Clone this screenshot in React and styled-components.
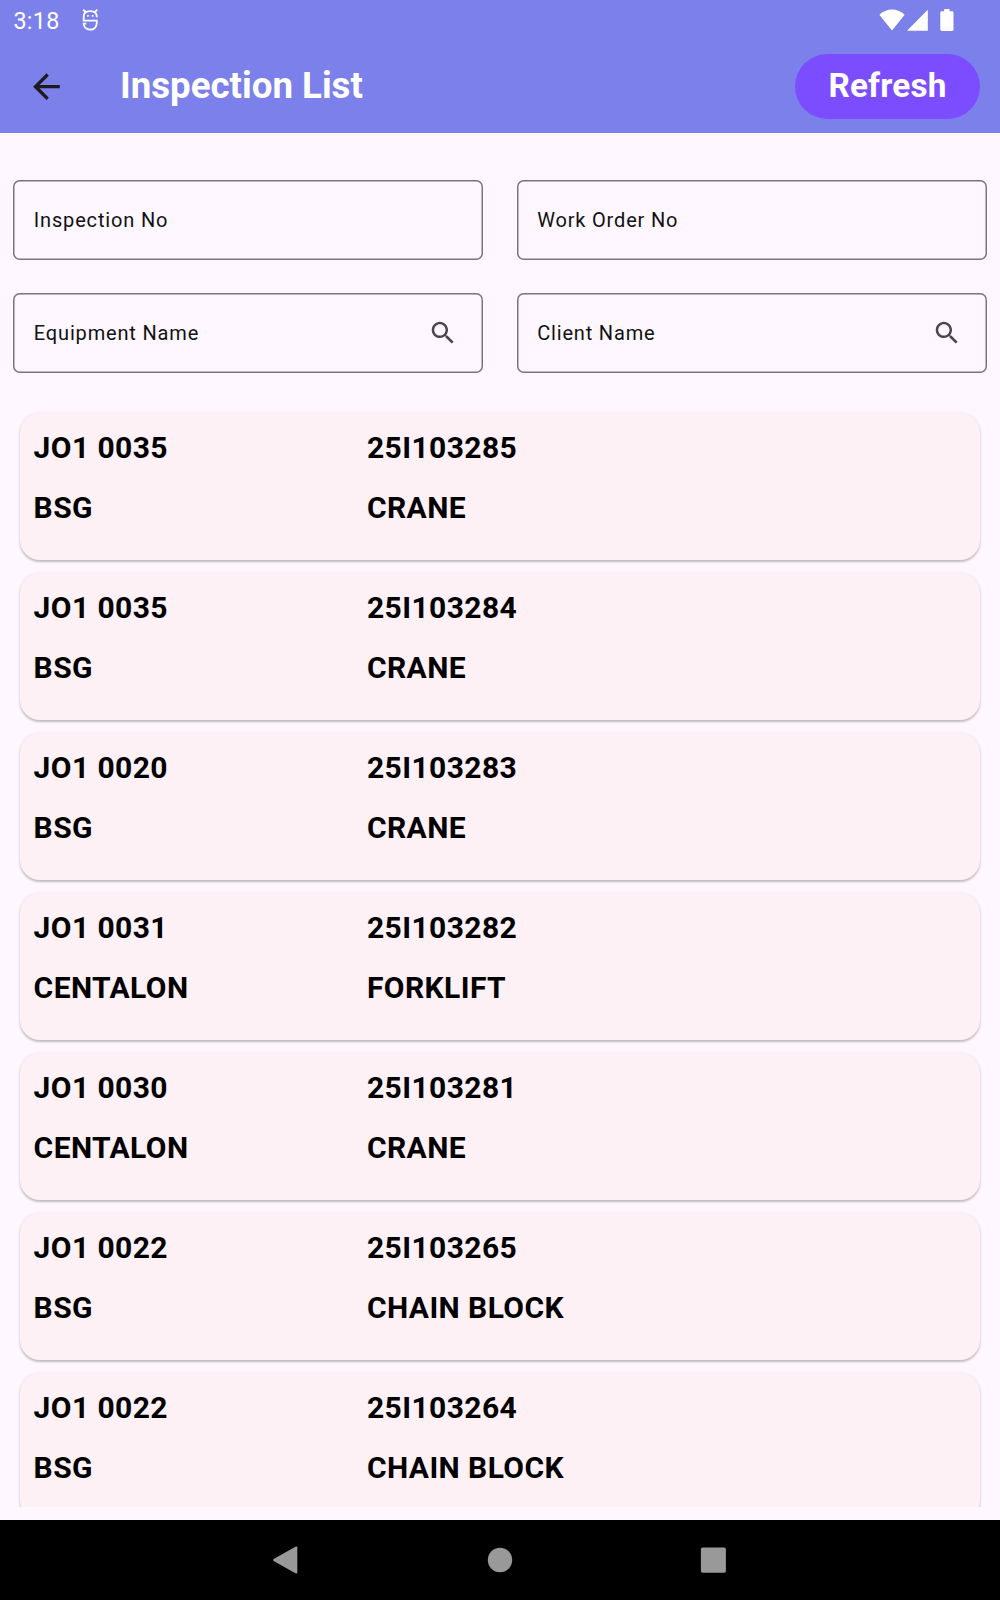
import React from 'react';
import styled, { createGlobalStyle } from 'styled-components';

const GlobalStyle = createGlobalStyle`
  *, *::before, *::after { box-sizing: border-box; }
  body { margin: 0; background: #fef7ff; }
`;

const Screen = styled.div`
  display: flex;
  flex-direction: column;
  width: 1000px;
  height: 1600px;
  overflow: hidden;
  background: #fef7ff;
  color: #000;
  font-family: Roboto, 'Liberation Sans', sans-serif;
`;

const Header = styled.header`
  flex: none;
  height: 133.33px;
  background: #7c80ea;
  color: #fff;
`;

const StatusBar = styled.div`
  display: flex;
  align-items: center;
  justify-content: space-between;
  height: 40px;
  padding: 0 46px 0 13.4px;
`;

const StatusGroup = styled.div`
  display: flex;
  align-items: center;
  gap: ${(p) => p.$gap}px;
`;

const Clock = styled.span`
  font-size: 23.33px;
  line-height: 28px;
  padding-top: 2px;
  letter-spacing: 0.3px;
`;

const BatterySlot = styled.span`
  display: flex;
  margin-left: 12px;
`;

const Toolbar = styled.div`
  display: flex;
  align-items: center;
  height: 93.33px;
  padding: 0 20px 1px 26px;
`;

const BackButton = styled.button`
  display: flex;
  width: 40px;
  height: 40px;
  padding: 0;
  border: 0;
  background: none;
  color: #1d1b20;
`;

const Title = styled.h1`
  flex: 1;
  margin: 0 0 0 54px;
  font-size: 36.67px;
  line-height: 46px;
  font-weight: 700;
`;

const RefreshButton = styled.button`
  width: 185px;
  height: 65px;
  padding: 0;
  border: 0;
  border-radius: 33px;
  background: #7c4dff;
  color: #fff;
  font: 700 33.33px/40px Roboto, 'Liberation Sans', sans-serif;
  letter-spacing: 0.17px;
`;

const Filters = styled.form`
  flex: none;
  display: grid;
  grid-template-columns: 1fr 1fr;
  gap: 33.33px;
  padding: 46.67px 13.33px 0;
`;

const Field = styled.label`
  display: flex;
  align-items: center;
  justify-content: space-between;
  height: 80px;
  padding: 0 25px 0 20.5px;
  box-shadow: inset 0 0 0 1.5px #79747e;
  border-radius: 6.67px;
  font-size: 20px;
  line-height: 30px;
  letter-spacing: 0.83px;
  color: #111;
`;

const List = styled.ul`
  flex: 1;
  min-height: 0;
  display: flex;
  flex-direction: column;
  gap: 13.33px;
  margin: 33.33px 0 13.33px;
  padding: 6.67px 20px 0;
  overflow: hidden;
  list-style: none;
`;

const Card = styled.li`
  flex: none;
  display: grid;
  grid-template-columns: 333.33px 1fr;
  grid-auto-rows: 60px;
  align-content: start;
  height: 146.67px;
  padding: 4px 13.6px;
  border-radius: 20px;
  background: #fdf1f5;
  box-shadow: 0 1.5px 2px rgba(0, 0, 0, 0.2), 0 1px 4px rgba(0, 0, 0, 0.08);
`;

const Value = styled.span`
  display: flex;
  align-items: center;
  font-size: 30px;
  font-weight: 700;
  letter-spacing: 0.42px;
`;

const NavBar = styled.nav`
  flex: none;
  display: flex;
  align-items: center;
  justify-content: center;
  gap: 173.33px;
  height: 80px;
  background: #000;
  color: #999;
`;

const NavIcon = styled.svg`
  width: 40px;
  height: 40px;
  fill: currentColor;
`;

const Robot = () => (
  <svg width="18" height="24" viewBox="0 0 18 24" fill="none" stroke="#fff" strokeWidth="1.8">
    <path d="M15.8 9.2V8.7c0-3.7-2.7-5.5-6.6-5.5S2.7 5 2.7 8.7v3.9h13.1v2c0 4.3-2.7 7.1-6.6 7.1s-6.5-2.6-6.5-6.1h2.6" />
    <path d="M2.2 1.7l3 2.8M16.3 1.7l-3 2.8" />
    <path d="M6.1 7.9h1.7M10.8 7.9h1.7" />
  </svg>
);

const Wifi = () => (
  <svg width="26" height="22" viewBox="0 0 26 22" fill="#fff">
    <path d="M13 21.5L0.3 5.7C3.8 2.4 8.1 0.4 13 0.4s9.2 2 12.7 5.3z" />
  </svg>
);

const Signal = () => (
  <svg width="21" height="22" viewBox="0 0 21 22" fill="#fff">
    <path d="M0 21.7L20.8 0.8v20.9z" />
  </svg>
);

const Battery = () => (
  <svg width="14" height="22" viewBox="0 0 14 22" fill="#fff">
    <path d="M4.2 0h5.4v2.2h2.5c.8 0 1.4.6 1.4 1.4v17c0 .8-.6 1.4-1.4 1.4H1.7c-.8 0-1.4-.6-1.4-1.4v-17c0-.8.6-1.4 1.4-1.4h2.5z" />
  </svg>
);

const BackArrow = () => (
  <svg width="40" height="40" viewBox="-0.3 -0.4 24 24" fill="currentColor">
    <path d="M20 11H7.83l5.59-5.59L12 4l-8 8 8 8 1.41-1.41L7.83 13H20v-2z" />
  </svg>
);

const SearchIcon = () => (
  <svg width="30" height="30" viewBox="0 0 24 24" fill="#49454f">
    <path d="M15.5 14h-.79l-.28-.27C15.41 12.59 16 11.11 16 9.5 16 5.91 13.09 3 9.5 3S3 5.91 3 9.5 5.91 16 9.5 16c1.61 0 3.09-.59 4.23-1.57l.27.28v.79l5 4.99L20.49 19l-4.99-5zm-6 0C7.01 14 5 11.99 5 9.5S7.01 5 9.5 5 14 7.01 14 9.5 11.99 14 9.5 14z" />
  </svg>
);

const filters = [
  { label: 'Inspection No' },
  { label: 'Work Order No' },
  { label: 'Equipment Name', search: true },
  { label: 'Client Name', search: true },
];

const inspections = [
  ['JO1 0035', '25I103285', 'BSG', 'CRANE'],
  ['JO1 0035', '25I103284', 'BSG', 'CRANE'],
  ['JO1 0020', '25I103283', 'BSG', 'CRANE'],
  ['JO1 0031', '25I103282', 'CENTALON', 'FORKLIFT'],
  ['JO1 0030', '25I103281', 'CENTALON', 'CRANE'],
  ['JO1 0022', '25I103265', 'BSG', 'CHAIN BLOCK'],
  ['JO1 0022', '25I103264', 'BSG', 'CHAIN BLOCK'],
];

export default function App() {
  return (
    <Screen>
      <GlobalStyle />
      <Header>
        <StatusBar>
          <StatusGroup $gap={21}>
            <Clock>3:18</Clock>
            <Robot />
          </StatusGroup>
          <StatusGroup $gap={0}>
            <StatusGroup $gap={2}>
              <Wifi />
              <Signal />
            </StatusGroup>
            <BatterySlot>
              <Battery />
            </BatterySlot>
          </StatusGroup>
        </StatusBar>
        <Toolbar>
          <BackButton type="button" aria-label="Back">
            <BackArrow />
          </BackButton>
          <Title>Inspection List</Title>
          <RefreshButton type="button">Refresh</RefreshButton>
        </Toolbar>
      </Header>
      <Filters>
        {filters.map((f) => (
          <Field key={f.label}>
            {f.label}
            {f.search && <SearchIcon />}
          </Field>
        ))}
      </Filters>
      <List>
        {inspections.map((values) => (
          <Card key={values[1]}>
            {values.map((v) => (
              <Value key={v}>{v}</Value>
            ))}
          </Card>
        ))}
      </List>
      <NavBar>
        <NavIcon viewBox="0 0 40 40">
          <path d="M30.3 7.3v25.4c0 .7-.8 1-1.4.7L6.6 20.9c-.7-.4-.7-1.4 0-1.8L28.9 6.6c.6-.3 1.4 0 1.4.7z" />
        </NavIcon>
        <NavIcon viewBox="0 0 40 40">
          <circle cx="20" cy="20" r="12.2" />
        </NavIcon>
        <NavIcon viewBox="0 0 40 40">
          <rect x="7.9" y="7.4" width="25" height="25.3" rx="1.8" />
        </NavIcon>
      </NavBar>
    </Screen>
  );
}
